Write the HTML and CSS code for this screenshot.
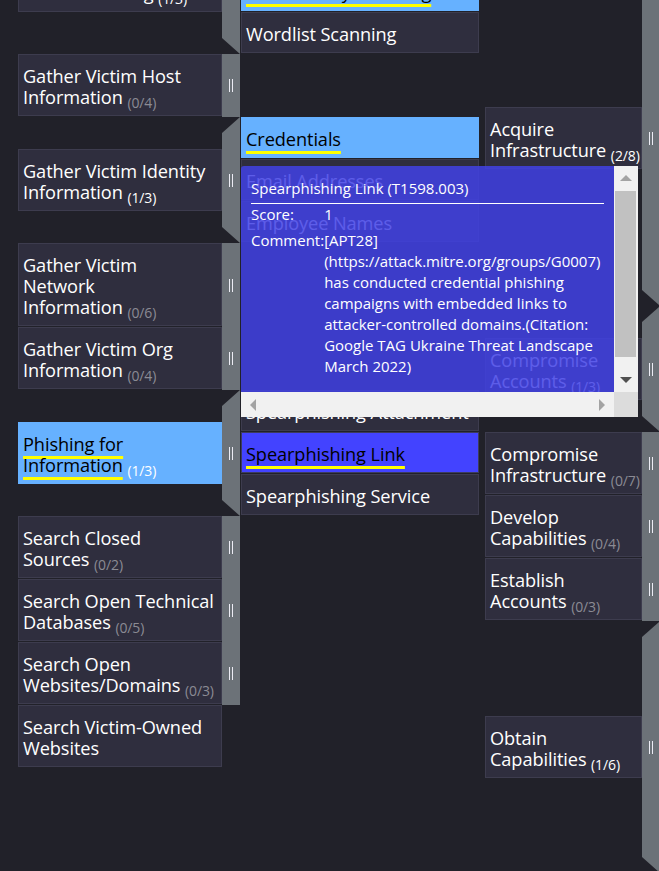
FILE: index.html
```html
<!DOCTYPE html>
<html lang="en">
<head>
<meta charset="utf-8">
<title>ATT&amp;CK Navigator</title>
<link rel="stylesheet" href="styles.css">
</head>
<body>
<div class="matrix">
  <div class="tactic recon">
    <div class="row expanded">
      <div class="tech"><span class="name">Active Scanning</span> <span class="count on">(1/3)</span></div>
      <div class="side has open"><i class="grip"></i></div>
      <div class="subs">
        <div class="sub">Scanning IP Blocks</div>
        <div class="sub hl-light"><span class="commented">Vulnerability Scanning</span></div>
        <div class="sub">Wordlist Scanning</div>
      </div>
    </div>
    <div class="row">
      <div class="tech"><span class="name">Gather Victim Host<br>Information</span> <span class="count">(0/4)</span></div>
      <div class="side has"><i class="grip"></i></div>
      <div class="subs"></div>
    </div>
    <div class="row expanded">
      <div class="tech"><span class="name">Gather Victim Identity<br>Information</span> <span class="count on">(1/3)</span></div>
      <div class="side has open"><i class="grip"></i></div>
      <div class="subs">
        <div class="sub hl-light"><span class="commented">Credentials</span></div>
        <div class="sub">Email Addresses</div>
        <div class="sub">Employee Names</div>
      </div>
    </div>
    <div class="row">
      <div class="tech"><span class="name">Gather Victim<br>Network<br>Information</span> <span class="count">(0/6)</span></div>
      <div class="side has"><i class="grip"></i></div>
      <div class="subs"></div>
    </div>
    <div class="row">
      <div class="tech"><span class="name">Gather Victim Org<br>Information</span> <span class="count">(0/4)</span></div>
      <div class="side has"><i class="grip"></i></div>
      <div class="subs"></div>
    </div>
    <div class="row expanded">
      <div class="tech hl-light"><span class="name commented">Phishing for<br>Information</span> <span class="count on">(1/3)</span></div>
      <div class="side has open"><i class="grip"></i></div>
      <div class="subs">
        <div class="sub">Spearphishing Attachment</div>
        <div class="sub hl-dark"><span class="commented">Spearphishing Link</span></div>
        <div class="sub">Spearphishing Service</div>
      </div>
    </div>
    <div class="row">
      <div class="tech"><span class="name">Search Closed<br>Sources</span> <span class="count">(0/2)</span></div>
      <div class="side has"><i class="grip"></i></div>
      <div class="subs"></div>
    </div>
    <div class="row">
      <div class="tech"><span class="name">Search Open Technical<br>Databases</span> <span class="count">(0/5)</span></div>
      <div class="side has"><i class="grip"></i></div>
      <div class="subs"></div>
    </div>
    <div class="row">
      <div class="tech"><span class="name">Search Open<br>Websites/Domains</span> <span class="count">(0/3)</span></div>
      <div class="side has"><i class="grip"></i></div>
      <div class="subs"></div>
    </div>
    <div class="row">
      <div class="tech"><span class="name">Search Victim-Owned<br>Websites</span></div>
      <div class="side"></div>
      <div class="subs"></div>
    </div>
  </div>

  <div class="tactic resdev">
    <div class="row">
      <div class="tech"><span class="name">Acquire Access</span></div>
      <div class="side"></div>
      <div class="subs"></div>
    </div>
    <div class="row expanded">
      <div class="tech"><span class="name">Acquire<br>Infrastructure</span> <span class="count on">(2/8)</span></div>
      <div class="side has open"><i class="grip"></i></div>
      <div class="subs">
        <div class="sub">Botnet</div>
        <div class="sub">DNS Server</div>
        <div class="sub">Domains</div>
        <div class="sub">Malvertising</div>
        <div class="sub">Server</div>
        <div class="sub">Serverless</div>
        <div class="sub">Virtual Private Server</div>
        <div class="sub">Web Services</div>
      </div>
    </div>
    <div class="row expanded">
      <div class="tech"><span class="name">Compromise<br>Accounts</span> <span class="count on">(1/3)</span></div>
      <div class="side has open"><i class="grip"></i></div>
      <div class="subs">
        <div class="sub">Cloud Accounts</div>
        <div class="sub">Email Accounts</div>
        <div class="sub">Social Media Accounts</div>
      </div>
    </div>
    <div class="row">
      <div class="tech"><span class="name">Compromise<br>Infrastructure</span> <span class="count">(0/7)</span></div>
      <div class="side has"><i class="grip"></i></div>
      <div class="subs"></div>
    </div>
    <div class="row">
      <div class="tech"><span class="name">Develop<br>Capabilities</span> <span class="count">(0/4)</span></div>
      <div class="side has"><i class="grip"></i></div>
      <div class="subs"></div>
    </div>
    <div class="row">
      <div class="tech"><span class="name">Establish<br>Accounts</span> <span class="count">(0/3)</span></div>
      <div class="side has"><i class="grip"></i></div>
      <div class="subs"></div>
    </div>
    <div class="row expanded">
      <div class="tech"><span class="name">Obtain<br>Capabilities</span> <span class="count on">(1/6)</span></div>
      <div class="side has open"><i class="grip"></i></div>
      <div class="subs">
        <div class="sub">Code Signing Certificates</div>
        <div class="sub">Digital Certificates</div>
        <div class="sub">Exploits</div>
        <div class="sub">Malware</div>
        <div class="sub">Tool</div>
        <div class="sub">Vulnerabilities</div>
      </div>
    </div>
  </div>
</div>

<div class="tooltip">
  <div class="tip-body">
    <div class="tip-title">Spearphishing Link (T1598.003)</div>
    <div class="tip-rule"></div>
    <table class="tip-table">
      <tr><td class="key">Score:</td><td class="val">1</td></tr>
      <tr><td class="key">Comment:</td><td class="val">[APT28] (https://attack.mitre.org/groups/G0007) has conducted credential phishing campaigns with embedded links to attacker-controlled domains.(Citation: Google TAG Ukraine Threat Landscape March 2022)</td></tr>
    </table>
  </div>
  <div class="vbar">
    <div class="btn"><i class="arr up"></i></div>
    <div class="thumb"></div>
    <div class="track"></div>
    <div class="btn"><i class="arr down"></i></div>
  </div>
  <div class="hbar">
    <div class="btn"><i class="arr left"></i></div>
    <div class="track"></div>
    <div class="btn"><i class="arr right"></i></div>
  </div>
  <div class="corner"></div>
</div>
</body>
</html>
```

FILE: styles.css
```css
* { box-sizing: border-box; }

html, body {
  margin: 0;
  height: 100%;
  overflow: hidden;
  background: #212129;
}

body {
  position: relative;
  font-family: "Open Sans", "Noto Sans", sans-serif;
  color: #fff;
}

.matrix {
  display: flex;
  gap: 6px;
  margin-top: -72px;
  padding-left: 18px;
  width: max-content;
}

.tactic {
  display: flex;
  flex-direction: column;
}

.row {
  display: flex;
}

.tech {
  background: #2f2e3e;
  border: 1px solid #3d3c4e;
  padding: 11px 2px 7px 4px;
  font-size: 18.2px;
  letter-spacing: -0.1px;
  line-height: 21px;
  white-space: nowrap;
  margin-bottom: 1px;
}

.recon .tech { width: 204px; }
.resdev .tech { width: 157px; }

.row.expanded > .tech {
  align-self: center;
  margin-bottom: 0;
}

.side {
  width: 18px;
  flex: none;
  display: flex;
  align-items: center;
  justify-content: center;
}

.side.has { background: #6c7278; }

.side.open {
  clip-path: polygon(0 16px, 100% 0, 100% 100%, 0 calc(100% - 16px));
}

.grip {
  display: block;
  width: 4px;
  height: 13px;
  border-left: 1px solid #ececf4;
  border-right: 1px solid #ececf4;
}

.subs {
  width: 239px;
  flex: none;
  padding-left: 1px;
  display: flex;
  flex-direction: column;
}

.sub {
  background: #2f2e3e;
  border: 1px solid #3d3c4e;
  padding: 11px 4px 7px;
  font-size: 18.2px;
  letter-spacing: -0.1px;
  line-height: 21px;
  white-space: nowrap;
  margin-bottom: 1px;
}

.count {
  font-size: 14px;
  line-height: 0;
  vertical-align: -4px;
  color: #8b8b94;
}

.count.on { color: #fff; }

.hl-light {
  background: #66b1ff;
  border-color: #66b1ff;
  color: #000;
}

.hl-dark {
  background: #4343ff;
  border-color: #3d3c5e;
  color: #000;
}

.commented {
  text-decoration: underline 3px #ffff00;
  text-underline-offset: 5px;
}

/* tooltip */
.tooltip {
  position: absolute;
  left: 241px;
  top: 166px;
  width: 397px;
  height: 251px;
  display: grid;
  grid-template-columns: 1fr 24px;
  grid-template-rows: 1fr 25px;
  border-radius: 3px 0 0 0;
  overflow: hidden;
  font-size: 15px;
  line-height: 21px;
  color: #fff;
  z-index: 5;
}

.tip-body {
  background: rgba(65, 65, 229, 0.85);
  padding: 12px 10px 0;
  overflow: hidden;
}

.tip-rule {
  border-top: 1px solid #fff;
  margin-top: 4px;
}

.tip-table {
  border-collapse: collapse;
}

.tip-table td {
  padding: 0 0 5px;
  vertical-align: top;
}

.tip-table td.key { white-space: nowrap; }

.vbar {
  background: #f1f1f1;
  display: flex;
  flex-direction: column;
}

.hbar {
  background: #f1f1f1;
  display: flex;
}

.btn {
  flex: none;
  width: 24px;
  height: 24px;
  display: flex;
  align-items: center;
  justify-content: center;
}

.hbar .btn { height: 25px; }

.thumb {
  flex: none;
  height: 166px;
  margin: 1px 2px 0 1px;
  background: #c1c1c1;
}

.track { flex: 1; }

.corner { background: #dcdcdc; }

.arr {
  display: block;
  width: 0;
  height: 0;
  border-style: solid;
}

.arr.up {
  border-width: 0 6px 6px;
  border-color: transparent transparent #a3a3a3;
}

.arr.down {
  border-width: 6px 6px 0;
  border-color: #505050 transparent transparent;
}

.arr.left {
  border-width: 6px 6px 6px 0;
  border-color: transparent #a3a3a3 transparent transparent;
}

.arr.right {
  border-width: 6px 0 6px 6px;
  border-color: transparent transparent transparent #a3a3a3;
}
```
